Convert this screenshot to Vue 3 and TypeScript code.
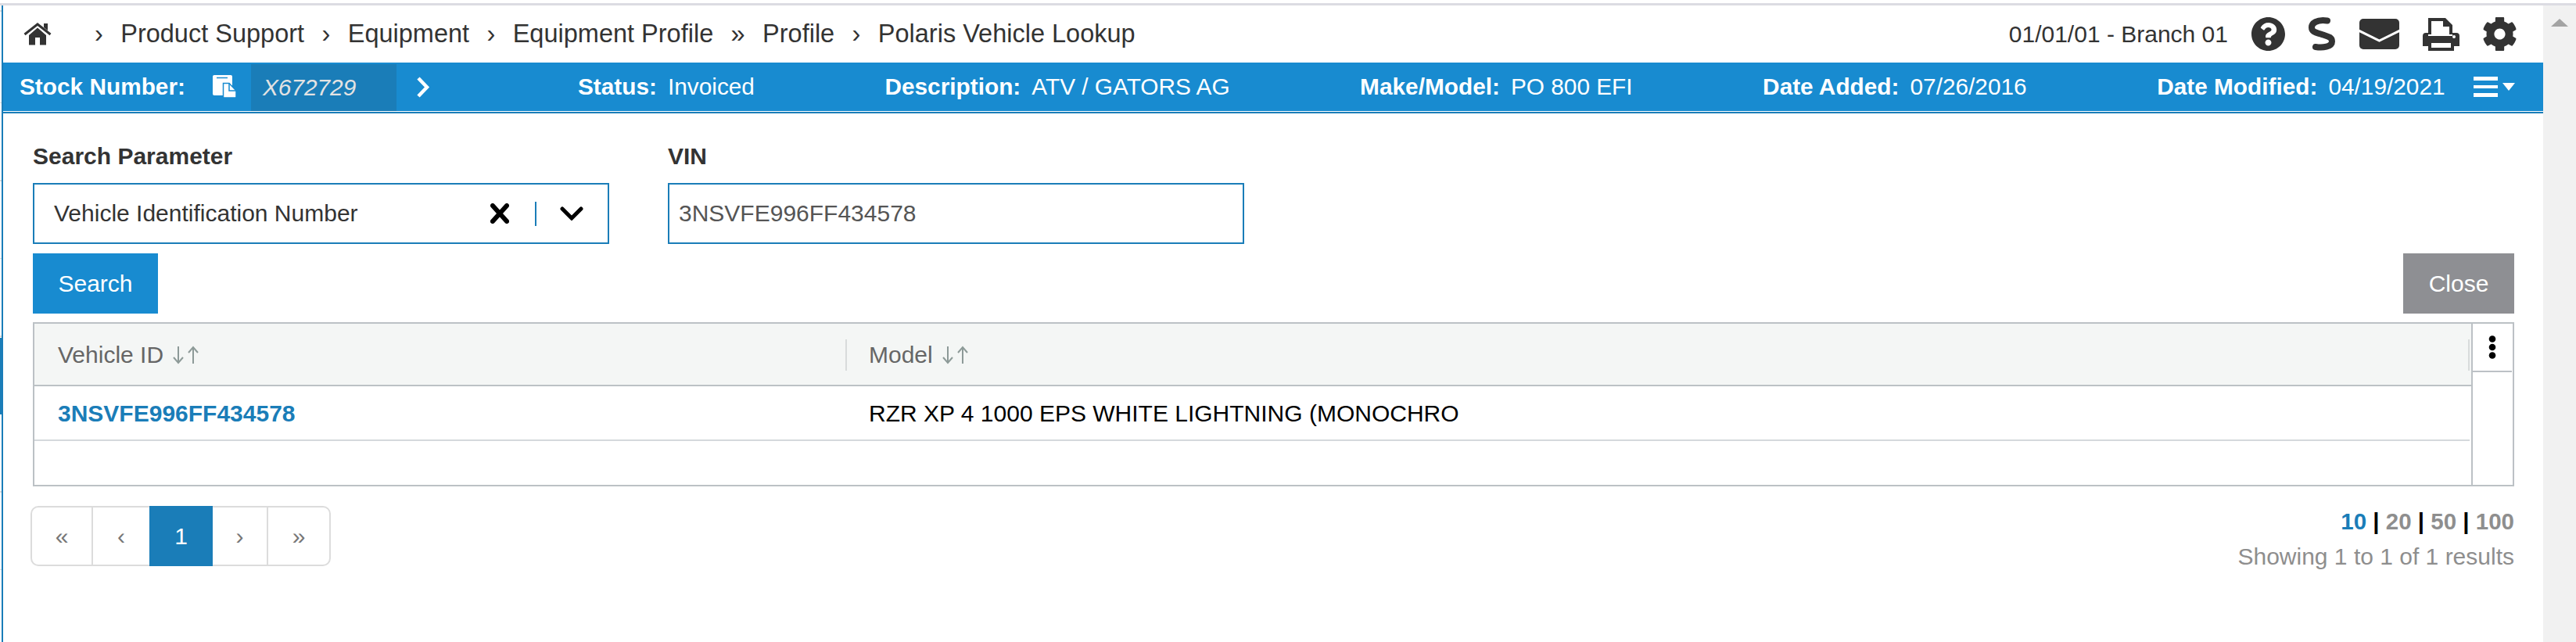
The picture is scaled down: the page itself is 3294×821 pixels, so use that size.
<script setup lang="ts">
import { ref } from 'vue';

interface Crumb {
  sep: string;
  label: string;
}

interface BarField {
  label: string;
  value: string;
}

const crumbs: Crumb[] = [
  { sep: '›', label: 'Product Support' },
  { sep: '›', label: 'Equipment' },
  { sep: '›', label: 'Equipment Profile' },
  { sep: '»', label: 'Profile' },
  { sep: '›', label: 'Polaris Vehicle Lookup' }
];

const barFields: BarField[] = [
  { label: 'Status:', value: 'Invoiced' },
  { label: 'Description:', value: 'ATV / GATORS AG' },
  { label: 'Make/Model:', value: 'PO 800 EFI' },
  { label: 'Date Added:', value: '07/26/2016' },
  { label: 'Date Modified:', value: '04/19/2021' }
];

const vin = ref('3NSVFE996FF434578');
const pageSizes = [10, 20, 50, 100];
const activeSize = ref(10);
</script>

<template>
  <div class="page">
    <div class="top-rule"></div>
    <div class="shell">
      <div class="rail"><div class="rail-active"></div></div>
      <main class="main">
        <header class="topbar">
          <svg class="home" width="36" height="29" viewBox="0 0 36 29">
            <path d="M1.5 15 18 2l16.500 13" fill="none" stroke="#333" stroke-width="3" />
            <path d="M26 1h5v9l-5-4z" fill="#333" />
            <path d="M18 6.500 29 16v12.500h-8V19h-6v9.500H7V16z" fill="#333" />
          </svg>
          <nav class="crumbs">
            <template v-for="c in crumbs" :key="c.label">
              <span class="crumb-sep">{{ c.sep }}</span>
              <span class="crumb">{{ c.label }}</span>
            </template>
          </nav>
          <span class="branch">01/01/01 - Branch 01</span>
          <div class="top-icons">
            <svg width="43" height="43" viewBox="8 8 496 496">
              <path fill="#333" d="M504 256c0 136.997-111.043 248-248 248S8 392.997 8 256C8 119.083 119.043 8 256 8s248 111.083 248 248zM262.655 90c-54.497 0-89.255 22.957-116.549 63.758-3.536 5.286-2.353 12.415 2.715 16.258l34.699 26.31c5.205 3.947 12.621 3.008 16.665-2.122 17.864-22.658 30.113-35.797 57.303-35.797 20.429 0 45.698 13.148 45.698 32.958 0 14.976-12.363 22.667-32.534 33.976C247.128 238.528 216 254.941 216 296v4c0 6.627 5.373 12 12 12h56c6.627 0 12-5.373 12-12v-1.333c0-28.462 83.186-29.647 83.186-106.667 0-58.002-60.165-102-116.531-102zM256 338c-25.365 0-46 20.635-46 46 0 25.364 20.635 46 46 46s46-20.636 46-46c0-25.365-20.635-46-46-46z" />
            </svg>
            <svg width="35" height="43" viewBox="0 0 35 43">
              <path d="M24 4.500C10 2.500 4 8 4 13c0 7 8 7 13 9 7 2.500 13 3 13 9 0 7-12 8.500-21 7" fill="none" stroke="#333" stroke-width="8" stroke-linecap="round" />
            </svg>
            <svg width="51" height="39" viewBox="0 0 51 39">
              <rect width="51" height="39" rx="5" fill="#333" />
              <path d="M-1 15 25.500 28 52 15" fill="none" stroke="#fff" stroke-width="3" />
            </svg>
            <svg width="47" height="42" viewBox="0 0 47 42">
              <path fill="#333" d="M7 0h22l9 9v12h-4V11h-8V4H11v17H7z" />
              <path fill="#333" d="M4 19h3v4h31v-4h5a4 4 0 0 1 4 4v13h-7v-6H7v6H0V23a4 4 0 0 1 4-4z" />
              <path fill="#333" fill-rule="evenodd" d="M7 28h33v14H7zM11 32v6h25v-6z" />
              <circle cx="40" cy="24" r="2" fill="#fff" />
            </svg>
            <svg width="43" height="43" viewBox="15 13 482 486">
              <path fill="#333" d="M487.400 315.700l-42.600-24.600c4.300-23.200 4.300-47 0-70.200l42.600-24.600c4.900-2.800 7.100-8.600 5.500-14-11.100-35.600-30-67.800-54.700-94.600-3.800-4.100-10-5.100-14.800-2.300L380.800 110c-17.900-15.400-38.500-27.300-60.800-35.100V25.800c0-5.600-3.900-10.500-9.400-11.700-36.700-8.200-74.300-7.800-109.200 0-5.500 1.200-9.400 6.100-9.400 11.700V75c-22.200 7.900-42.800 19.800-60.800 35.100L88.700 85.500c-4.900-2.800-11-1.900-14.800 2.300-24.700 26.700-43.600 58.900-54.700 94.600-1.700 5.400.6 11.200 5.500 14L67.300 221c-4.300 23.200-4.300 47 0 70.200l-42.600 24.600c-4.900 2.800-7.100 8.600-5.500 14 11.100 35.600 30 67.800 54.700 94.600 3.800 4.100 10 5.100 14.800 2.300l42.600-24.600c17.900 15.400 38.500 27.300 60.800 35.100v49.200c0 5.600 3.900 10.500 9.400 11.700 36.700 8.200 74.300 7.800 109.200 0 5.500-1.200 9.400-6.100 9.400-11.700v-49.200c22.200-7.900 42.800-19.800 60.800-35.100l42.600 24.600c4.900 2.800 11 1.900 14.800-2.300 24.700-26.700 43.600-58.900 54.700-94.600 1.500-5.500-.7-11.300-5.600-14.100zM256 336c-44.100 0-80-35.900-80-80s35.900-80 80-80 80 35.900 80 80-35.900 80-80 80z" />
            </svg>
          </div>
        </header>

        <div class="stock-bar">
          <span class="bar-label">Stock Number:</span>
          <svg class="copy-icon" width="31" height="30" viewBox="0 0 31 30">
            <rect width="25" height="26" rx="2" fill="#fff" />
            <path d="M5 3.500h14" stroke="#188bd0" stroke-width="1.500" />
            <path d="M13.500 10.500h7.500l9 9.500v8a1 1 0 0 1-1 1H14.500a1 1 0 0 1-1-1z" fill="#fff" stroke="#188bd0" stroke-width="1.500" />
            <path d="M21 10v10h9" fill="none" stroke="#188bd0" stroke-width="1.500" />
          </svg>
          <span class="stock-no">X672729</span>
          <svg class="bar-chevron" width="20" height="27" viewBox="0 0 20 27">
            <path d="M4 2l11 11.500L4 25" fill="none" stroke="#fff" stroke-width="4.500" />
          </svg>
          <div class="bar-fields">
            <span v-for="f in barFields" :key="f.label" class="bar-field">
              <span class="bar-label">{{ f.label }}</span>
              <span class="bar-value">{{ f.value }}</span>
            </span>
          </div>
          <div class="bar-menu">
            <span class="burger"><i></i><i></i><i></i></span>
            <span class="caret"></span>
          </div>
        </div>
        <div class="bar-rule"></div>

        <section class="content">
          <div class="form-row">
            <div class="form-group">
              <label class="form-label">Search Parameter</label>
              <div class="select">
                <span class="select-text">Vehicle Identification Number</span>
                <svg class="select-x" width="24" height="26" viewBox="0 0 24 26">
                  <path d="M3 3l18 20M21 3 3 23" stroke="#000" stroke-width="6" stroke-linecap="round" />
                </svg>
                <span class="select-div"></span>
                <svg class="select-chev" width="30" height="18" viewBox="0 0 30 18">
                  <path d="M3 3l12 12L27 3" fill="none" stroke="#000" stroke-width="5" stroke-linecap="round" />
                </svg>
              </div>
            </div>
            <div class="form-group">
              <label class="form-label">VIN</label>
              <div class="input">{{ vin }}</div>
            </div>
          </div>

          <div class="action-row">
            <button class="btn btn-search">Search</button>
            <button class="btn btn-close">Close</button>
          </div>

          <div class="grid">
            <div class="grid-main">
              <div class="grid-head">
                <div class="col-a">
                  <span>Vehicle ID</span>
                  <svg class="sort" width="35" height="24" viewBox="0 0 35 24">
                    <path d="M8 1v21M2 15l6 7 6-7M27 23V2M21 9l6-7 6 7" fill="none" stroke="#8d9a98" stroke-width="2" />
                  </svg>
                </div>
                <div class="col-b">
                  <span class="head-div"></span>
                  <span>Model</span>
                  <svg class="sort" width="35" height="24" viewBox="0 0 35 24">
                    <path d="M8 1v21M2 15l6 7 6-7M27 23V2M21 9l6-7 6 7" fill="none" stroke="#8d9a98" stroke-width="2" />
                  </svg>
                  <span class="head-div head-div-end"></span>
                </div>
              </div>
              <div class="grid-row">
                <div class="col-a"><a class="vin-link">{{ vin }}</a></div>
                <div class="col-b cell">RZR XP 4 1000 EPS WHITE LIGHTNING (MONOCHRO</div>
              </div>
            </div>
            <div class="grid-side">
              <div class="side-btn">
                <svg width="10" height="30" viewBox="0 0 10 30">
                  <circle cx="5" cy="4.500" r="4.300" />
                  <circle cx="5" cy="15" r="4.300" />
                  <circle cx="5" cy="25.500" r="4.300" />
                </svg>
              </div>
            </div>
          </div>

          <div class="foot-row">
            <div class="pager">
              <span class="pg pg-first">«</span>
              <span class="pg pg-prev">‹</span>
              <span class="pg pg-active">1</span>
              <span class="pg pg-next">›</span>
              <span class="pg pg-last">»</span>
            </div>
            <div class="foot-info">
              <div class="sizes">
                <template v-for="(s, i) in pageSizes" :key="s">
                  <span v-if="i > 0" class="size-sep"> | </span>
                  <span class="size" :class="{ active: s === activeSize }">{{ s }}</span>
                </template>
              </div>
              <div class="showing">Showing 1 to 1 of 1 results</div>
            </div>
          </div>
        </section>
      </main>
      <aside class="scrollbar"><span class="scroll-up"></span></aside>
    </div>
  </div>
</template>

<style scoped>
.page {
  width: 3294px;
  height: 821px;
  display: flex;
  flex-direction: column;
  padding-top: 4px;
  box-sizing: border-box;
  background: #fff;
  font-family: "Liberation Sans", Arial, sans-serif;
  font-size: 30px;
  color: #333;
  overflow: hidden;
}

.top-rule {
  height: 3px;
  background: #dcdce2;
  flex-shrink: 0;
}

.shell {
  flex: 1;
  display: flex;
  min-height: 0;
}

.rail {
  width: 2px;
  flex-shrink: 0;
  background: repeating-linear-gradient(to bottom, #fff 0, #fff 97.500px, #d9d9d9 97.500px, #d9d9d9 99.500px);
  background-position: 0 26px;
}

.rail-active {
  height: 98px;
  margin-top: 425px;
  background: #1a7db8;
}

.main {
  flex: 1;
  min-width: 0;
  border-left: 2px solid #1a7db8;
}

.topbar {
  height: 73px;
  display: flex;
  align-items: center;
  padding: 0 34px 0 26px;
}

.home {
  flex-shrink: 0;
}

.crumbs {
  display: flex;
  align-items: center;
  gap: 22.400px;
  margin-left: 55px;
  font-size: 32.500px;
  color: #333;
}

.branch {
  margin-left: auto;
  font-size: 30px;
  color: #333;
}

.top-icons {
  display: flex;
  align-items: center;
  gap: 30px;
  margin-left: 30px;
}

.stock-bar {
  height: 62px;
  display: flex;
  align-items: center;
  padding-left: 21px;
  background: #188bd0;
  color: #fff;
  font-size: 29.800px;
}

.bar-label {
  font-weight: 700;
}

.copy-icon {
  margin-left: 35px;
  flex-shrink: 0;
}

.stock-no {
  align-self: flex-end;
  width: 186px;
  height: 60px;
  line-height: 60px;
  margin-left: 18px;
  padding-left: 15px;
  box-sizing: border-box;
  background: #1a7db8;
  color: #e3e3e3;
  font-style: italic;
}

.bar-chevron {
  margin-left: 24px;
  flex-shrink: 0;
}

.bar-fields {
  display: flex;
  gap: 166.500px;
  margin-left: 188px;
  white-space: nowrap;
}

.bar-value {
  margin-left: 14px;
}

.bar-menu {
  display: flex;
  align-items: center;
  margin-left: 36px;
}

.burger {
  display: flex;
  flex-direction: column;
  gap: 6px;
  width: 31px;
}

.burger i {
  display: block;
  height: 4.500px;
  background: #fff;
}

.caret {
  width: 0;
  height: 0;
  margin-left: 6px;
  border-left: 8.500px solid transparent;
  border-right: 8.500px solid transparent;
  border-top: 10px solid #fff;
}

.bar-rule {
  height: 2px;
  margin-top: 1px;
  background: #1a7db8;
}

.content {
  padding: 38px 37px 0 38px;
}

.form-row {
  display: flex;
  gap: 75px;
}

.form-group {
  width: 737px;
}

.form-label {
  display: block;
  height: 34px;
  line-height: 34px;
  margin-bottom: 17px;
  font-weight: 700;
  color: #333;
}

.select,
.input {
  height: 78px;
  box-sizing: border-box;
  border: 2px solid #1a7db8;
  display: flex;
  align-items: center;
  background: #fff;
}

.select {
  padding: 0 31px 0 25px;
}

.select-text {
  flex: 1;
  color: #333;
}

.select-x {
  flex-shrink: 0;
  margin-right: 33px;
}

.select-div {
  width: 2px;
  height: 31px;
  background: #1a7db8;
  margin-right: 30px;
}

.input {
  padding-left: 12px;
  color: #555;
}

.action-row {
  display: flex;
  justify-content: space-between;
  margin-top: 12px;
}

.btn {
  height: 77px;
  border: none;
  color: #fff;
  font: inherit;
  padding: 0;
}

.btn-search {
  width: 160px;
  background: #188bd0;
}

.btn-close {
  width: 142px;
  background: #8e8f93;
}

.grid {
  display: flex;
  height: 210px;
  margin-top: 11px;
  box-sizing: border-box;
  border: 2px solid #bcc1c5;
}

.grid-main {
  flex: 1;
  min-width: 0;
  border-right: 2px solid #bcc1c5;
}

.grid-head {
  height: 80px;
  box-sizing: border-box;
  display: flex;
  padding-top: 2px;
  background: #f4f6f5;
  border-bottom: 2px solid #bcc1c5;
  color: #666;
}

.grid-row {
  height: 70px;
  box-sizing: border-box;
  display: flex;
  padding-top: 2px;
  margin-right: 2px;
  border-bottom: 2px solid #d5d9dc;
}

.col-a {
  width: 1037px;
  padding-left: 30px;
  box-sizing: border-box;
  display: flex;
  align-items: center;
}

.col-b {
  flex: 1;
  position: relative;
  display: flex;
  align-items: center;
  padding-left: 30px;
}

.sort {
  margin-left: 11px;
  flex-shrink: 0;
}

.head-div {
  position: absolute;
  left: 0;
  top: 18px;
  bottom: 18px;
  width: 2px;
  background: #d8dbdb;
}

.head-div-end {
  left: auto;
  right: 2px;
}

.vin-link {
  color: #1a7db8;
  font-weight: 700;
}

.cell {
  color: #000;
}

.grid-side {
  width: 51px;
  flex-shrink: 0;
}

.side-btn {
  height: 60px;
  margin-right: 1px;
  display: flex;
  align-items: center;
  justify-content: center;
  border-bottom: 2px solid #bcc1c5;
}

.foot-row {
  display: flex;
  justify-content: space-between;
  margin-top: 25px;
}

.pager {
  display: flex;
  height: 77px;
  margin-left: -3px;
  box-sizing: border-box;
  border: 2px solid #dcdcdc;
  border-radius: 10px;
  color: #777;
  font-size: 30px;
}

.pg {
  display: flex;
  align-items: center;
  justify-content: center;
  box-sizing: border-box;
}

.pg-first {
  width: 78px;
  border-right: 2px solid #dcdcdc;
}

.pg-prev {
  width: 72px;
}

.pg-active {
  width: 81px;
  margin: -2px 0;
  background: #1a7db8;
  color: #fff;
}

.pg-next {
  width: 71px;
  border-right: 2px solid #dcdcdc;
}

.pg-last {
  width: 78px;
}

.foot-info {
  text-align: right;
  padding-top: 1px;
}

.sizes {
  font-size: 29.500px;
  font-weight: 700;
  line-height: 38px;
  color: #000;
  white-space: pre;
}

.size {
  color: #8e8e8e;
}

.size.active {
  color: #1a7db8;
}

.showing {
  margin-top: 7px;
  line-height: 38px;
  color: #8e8e8e;
}

.scrollbar {
  width: 42px;
  flex-shrink: 0;
  background: #f1f1f1;
  display: flex;
  justify-content: center;
  padding-top: 17px;
  box-sizing: border-box;
}

.scroll-up {
  width: 0;
  height: 0;
  border-left: 11px solid transparent;
  border-right: 11px solid transparent;
  border-bottom: 10px solid #a3a3a3;
}
</style>

<style>
html,
body {
  margin: 0;
  background: #fff;
}
</style>
